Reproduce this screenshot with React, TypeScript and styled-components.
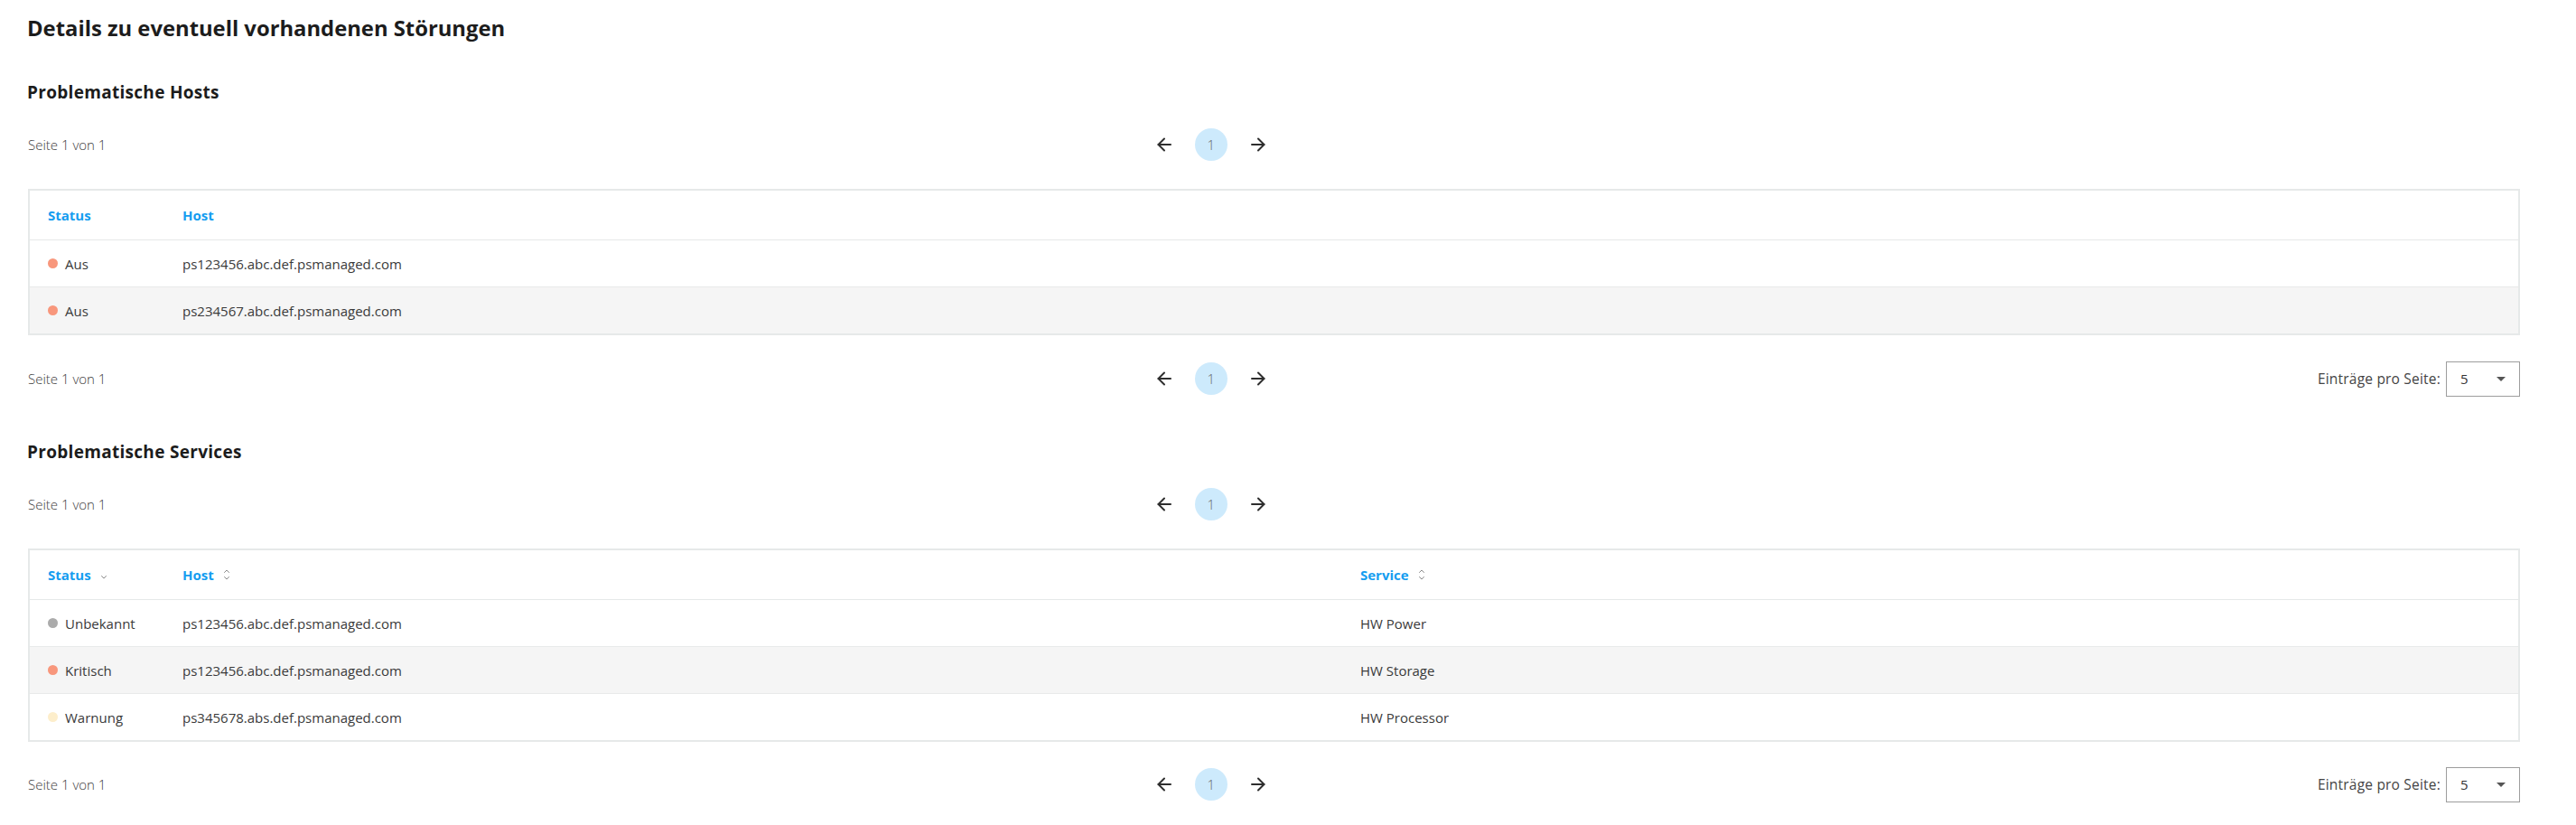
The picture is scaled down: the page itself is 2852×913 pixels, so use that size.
import React from "react";
import styled, { createGlobalStyle } from "styled-components";

const Global = createGlobalStyle`
  html, body { margin: 0; padding: 0; background: #ffffff; }
  body { font-family: "Open Sans", "Liberation Sans", sans-serif; color: #3a3a3a; }
  * { box-sizing: border-box; }
`;

const Page = styled.div`
  padding: 16px 62px 0 31px;
  display: flex;
  flex-direction: column;
`;

const Title = styled.h1`
  margin: 0 0 44px -1px;
  font-size: 23.8px;
  line-height: 30px;
  font-weight: 700;
  color: #1c1c1c;
`;

const Section = styled.section`
  display: flex;
  flex-direction: column;
  margin-bottom: 49px;
  &:last-child {
    margin-bottom: 0;
  }
`;

const SectionTitle = styled.h2`
  margin: 0 0 26px -1px;
  font-size: 19px;
  letter-spacing: 0.3px;
  line-height: 24px;
  font-weight: 700;
  color: #1c1c1c;
`;

const PagerRow = styled.div<{ $top?: number }>`
  height: 40px;
  display: flex;
  align-items: center;
  justify-content: space-between;
  margin-top: ${(p) => p.$top ?? 0}px;
`;

const PageInfo = styled.div`
  font-size: 15px;
  font-weight: 300;
  color: #3c3c3c;
`;

const Pager = styled.div`
  display: flex;
  align-items: center;
  gap: 26px;
  margin-right: 2px;
`;

const ArrowButton = styled.button`
  border: 0;
  background: transparent;
  padding: 0;
  width: 16px;
  height: 16px;
  display: flex;
  align-items: center;
  justify-content: center;
  cursor: pointer;
  color: #2e2e2e;
`;

const PageBubble = styled.div`
  width: 36px;
  height: 36px;
  border-radius: 50%;
  background: #cdeafc;
  color: #6a6a6a;
  font-size: 15px;
  font-weight: 300;
  display: flex;
  align-items: center;
  justify-content: center;
`;

const PerPage = styled.div<{ $hidden?: boolean }>`
  display: flex;
  align-items: center;
  gap: 6px;
  visibility: ${(p) => (p.$hidden ? "hidden" : "visible")};
  font-size: 15.5px;
  letter-spacing: 0.2px;
  color: #444;
`;

const Select = styled.div`
  width: 82px;
  height: 39px;
  border: 1px solid #9d9d9d;
  display: flex;
  align-items: center;
  justify-content: space-between;
  padding: 0 15px 0 15px;
  font-size: 15px;
  letter-spacing: 0;
  color: #333;
`;

const Caret = styled.span`
  width: 0;
  height: 0;
  border-left: 5px solid transparent;
  border-right: 5px solid transparent;
  border-top: 5px solid #555;
`;

const Table = styled.div<{ $cols: string }>`
  margin-top: 29px;
  border: 2px solid #e6e9e9;
  display: grid;
  grid-template-columns: ${(p) => p.$cols};
`;

const HeadCell = styled.div`
  height: 55px;
  padding: 0 20px;
  display: flex;
  align-items: center;
  gap: 10px;
  font-size: 15px;
  font-weight: 700;
  color: #159df0;
  border-bottom: 1px solid #e6e9e9;
`;

const Cell = styled.div<{ $alt: boolean; $last: boolean }>`
  height: ${(p) => (p.$last ? 51 : 52)}px;
  padding: 0 20px;
  display: flex;
  align-items: center;
  gap: 8px;
  font-size: 15px;
  color: #3a3a3a;
  background: ${(p) => (p.$alt ? "#f5f5f5" : "#ffffff")};
  border-bottom: ${(p) => (p.$last ? "0" : "1px solid #e8eaea")};
`;

const Dot = styled.span<{ $color: string }>`
  width: 11px;
  height: 11px;
  border-radius: 50%;
  background: ${(p) => p.$color};
  flex: none;
`;

const SortIcon = styled.svg`
  flex: none;
  color: #8a8a8a;
`;

const ArrowLeft = () => (
  <svg width="16" height="16" viewBox="0 0 16 16" fill="none" stroke="currentColor" strokeWidth="2" strokeLinecap="round" strokeLinejoin="round">
    <path d="M15 8H1.5" />
    <path d="M8 1.5L1.5 8L8 14.5" />
  </svg>
);

const ArrowRight = () => (
  <svg width="16" height="16" viewBox="0 0 16 16" fill="none" stroke="currentColor" strokeWidth="2" strokeLinecap="round" strokeLinejoin="round">
    <path d="M1 8H14.5" />
    <path d="M8 1.5L14.5 8L8 14.5" />
  </svg>
);

const SortDown = () => (
  <SortIcon width="8" height="14" viewBox="0 0 8 14" fill="none" stroke="currentColor" strokeWidth="1" strokeLinecap="round" strokeLinejoin="round">
    <path d="M1.5 8.5L4 11L6.5 8.5" />
  </SortIcon>
);

const SortBoth = () => (
  <SortIcon width="8" height="14" viewBox="0 0 8 14" fill="none" stroke="currentColor" strokeWidth="1" strokeLinecap="round" strokeLinejoin="round">
    <path d="M1.5 4.5L4 2L6.5 4.5" />
    <path d="M1.5 9.5L4 12L6.5 9.5" />
  </SortIcon>
);

type Sort = "none" | "down" | "both";

const Pagination: React.FC<{ showPerPage: boolean; top?: number }> = ({ showPerPage, top }) => (
  <PagerRow $top={top}>
    <PageInfo>Seite 1 von 1</PageInfo>
    <Pager>
      <ArrowButton aria-label="Vorherige Seite"><ArrowLeft /></ArrowButton>
      <PageBubble>1</PageBubble>
      <ArrowButton aria-label="Nächste Seite"><ArrowRight /></ArrowButton>
    </Pager>
    <PerPage $hidden={!showPerPage}>
      Einträge pro Seite:
      <Select>
        5
        <Caret />
      </Select>
    </PerPage>
  </PagerRow>
);

const STATUS_COLORS: Record<string, string> = {
  Aus: "#f8977c",
  Kritisch: "#f8977c",
  Unbekannt: "#ababab",
  Warnung: "#fdeecb",
};

type Row = string[];

const DataTable: React.FC<{ cols: string; heads: { label: string; sort: Sort }[]; rows: Row[] }> = ({ cols, heads, rows }) => (
  <Table $cols={cols}>
    {heads.map((h) => (
      <HeadCell key={h.label}>
        {h.label}
        {h.sort === "down" && <SortDown />}
        {h.sort === "both" && <SortBoth />}
      </HeadCell>
    ))}
    {rows.map((r, ri) =>
      r.map((v, ci) => (
        <Cell key={`${ri}-${ci}`} $alt={ri % 2 === 1} $last={ri === rows.length - 1}>
          {ci === 0 && <Dot $color={STATUS_COLORS[v]} />}
          {v}
        </Cell>
      ))
    )}
  </Table>
);

export default function App() {
  return (
    <>
      <Global />
      <Page>
        <Title>Details zu eventuell vorhandenen Störungen</Title>
        <Section>
          <SectionTitle>Problematische Hosts</SectionTitle>
          <Pagination showPerPage={false} />
          <DataTable
            cols="149px 1fr"
            heads={[
              { label: "Status", sort: "none" },
              { label: "Host", sort: "none" },
            ]}
            rows={[
              ["Aus", "ps123456.abc.def.psmanaged.com"],
              ["Aus", "ps234567.abc.def.psmanaged.com"],
            ]}
          />
          <Pagination showPerPage top={28} />
        </Section>
        <Section>
          <SectionTitle>Problematische Services</SectionTitle>
          <Pagination showPerPage={false} />
          <DataTable
            cols="149px 1304px 1fr"
            heads={[
              { label: "Status", sort: "down" },
              { label: "Host", sort: "both" },
              { label: "Service", sort: "both" },
            ]}
            rows={[
              ["Unbekannt", "ps123456.abc.def.psmanaged.com", "HW Power"],
              ["Kritisch", "ps123456.abc.def.psmanaged.com", "HW Storage"],
              ["Warnung", "ps345678.abs.def.psmanaged.com", "HW Processor"],
            ]}
          />
          <Pagination showPerPage top={27} />
        </Section>
      </Page>
    </>
  );
}
